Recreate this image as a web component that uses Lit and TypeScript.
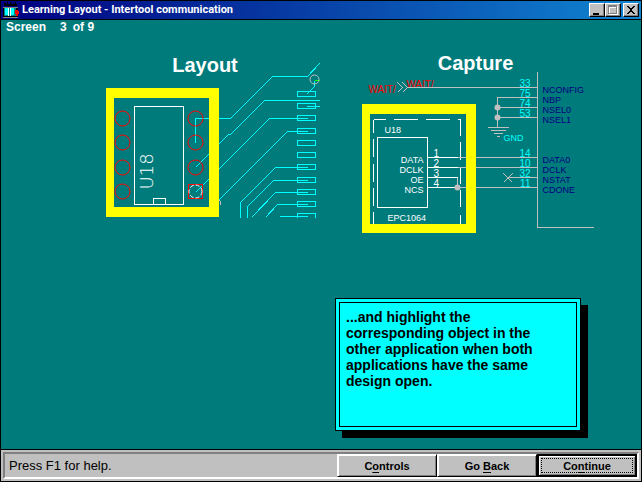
import { LitElement, html, css, svg } from "lit";
import { customElement } from "lit/decorators.js";

const frameColor = "#ffff00";

@customElement("layout-diagram")
class LayoutDiagram extends LitElement {
  static styles = css`
    :host { display: block; }
    svg { display: block; shape-rendering: crispEdges; }
    circle { shape-rendering: geometricPrecision; }
    .trace { fill: none; stroke: #00ffff; }
    .pad { fill: none; stroke: #ff0000; }
    .via { fill: none; stroke: #c0c0c0; }
    .white { fill: none; stroke: #ffffff; }
    .green { stroke: #00ff00; }
    .part { font: 200 18px "DejaVu Sans", sans-serif; fill: #ffffff; }
  `;

  render() {
    const pinRows = [118, 142, 167];
    const padRows = [91, 103, 115, 128, 140, 152, 164, 177, 189, 201, 213];
    return html`<svg width="230" height="175" viewBox="99.5 49.5 230 175" role="img" aria-label="Layout view of part U18">
      <g class="trace">
        <path d="M195 142V118H230L272 76H307L319 63" />
        <path d="M195 167L228 134H230L264 100H319" />
        <path d="M195 192L269 118H307" />
        <path d="M218 200L287 131H307" />
        <path d="M306 94L314 86V80" />
        <path d="M306 106H319" />
        <path d="M307 167H275L240 202V217" />
        <path d="M307 180H273L247 206V217" />
        <path d="M307 192H275L251 217" />
        <path d="M307 204H277L265 217" />
        <path d="M307 216H279" />
        ${padRows.map((y) => y === 213
          ? svg`<path d="M297 217V213H315V217" />`
          : svg`<rect x="297" y=${y} width="18" height="5" />`)}
      </g>
      <path class="green" d="M314 80H319" />
      <circle class="via" cx="314" cy="79" r="4.5" />
      <path class="via" d="M219 200L220 201V204L219 205" />
      <path fill=${frameColor} fill-rule="evenodd" d="M105.5 87.5H218.5V216.5H105.5ZM113.5 97.5V206.5H208.5V97.5Z" />
      <g class="trace">
        <path d="M195 142V118H208M195 167L208 154M195 192L208 179" />
      </g>
      <g class="pad">
        ${[...pinRows, 191].map((y) => svg`<circle cx="122" cy=${y} r="7.5" />`)}
        ${pinRows.map((y) => svg`<circle cx="195" cy=${y} r="7.5" />`)}
        <rect x="188" y="184" width="14" height="14" />
      </g>
      <circle class="white" cx="195" cy="191" r="6.5" stroke-dasharray="4 2" />
      <path class="white" d="M134 106H183V204H134ZM153 204V198H165V204" />
      <text class="part" transform="translate(152 189) rotate(-90)">U18</text>
    </svg>`;
  }
}

@customElement("capture-diagram")
class CaptureDiagram extends LitElement {
  static styles = css`
    :host { display: block; }
    svg { display: block; shape-rendering: crispEdges; }
    circle { shape-rendering: geometricPrecision; }
    text { font: 10px "Liberation Sans", Arial, sans-serif; }
    .wire { fill: none; stroke: #c0c0c0; }
    .dot { fill: #c0c0c0; }
    .white { fill: none; stroke: #ffffff; }
    .label { fill: #ffffff; }
    .small { font-size: 9px; }
    .net { fill: #ff0000; }
    .number { fill: #00ffff; }
    .signal { fill: #000080; }
    .end { text-anchor: end; }
  `;

  render() {
    const pins: [string, number][] = [["DATA", 162], ["DCLK", 172], ["OE", 182], ["NCS", 192]];
    const ports: [string, string, number][] = [
      ["33", "NCONFIG", 92], ["75", "NBP", 102], ["74", "NSEL0", 112], ["53", "NSEL1", 122],
      ["14", "DATA0", 162], ["10", "DCLK", 172], ["32", "NSTAT", 182], ["11", "CDONE", 192],
    ];
    return html`<svg width="245" height="190" viewBox="354.5 49.5 245 190" role="img" aria-label="Capture view of part U18">
      <text class="net" x="368" y="92">WAIT/</text>
      <text class="net" x="406" y="87">WAIT/</text>
      <g class="wire">
        <path d="M397 82L402 87L397 92M402 82L407 87L402 92M407 87H537" />
        <path d="M537 71V227H593M497 127V97H537M497 107H537M497 117H537" />
        <path d="M487 127H508M490 130H505M493 133H502M496 136H499" />
        <path d="M457 157H537M457 167H537M457 177V187H537M507 177H537" />
        <path d="M503 173L512 182M512 173L503 182" />
      </g>
      <path fill=${frameColor} fill-rule="evenodd" d="M361.5 103.5H475.5V232.5H361.5ZM369.5 113.5V223.5H465.5V113.5Z" />
      <g class="white">
        <rect x="377" y="137" width="50" height="70" />
        <path d="M427 157H457M427 167H457M427 177H457M427 187H457" />
        <path d="M373 119H385M393 119H417M425 119H449M457 119H460" />
        <path d="M373 119V132M373 138V156M373 163V181M373 187V205M373 211V223" />
        <path d="M460 119V135M460 141V159M460 166V183M460 189V206M460 214V223" />
      </g>
      <g class="wire"><path d="M457 157H465M457 167H465M457 187H465M457 177V187" /></g>
      <g class="dot">
        <circle cx="457" cy="187" r="3" />
        <circle cx="497" cy="107" r="3" />
        <circle cx="497" cy="117" r="3" />
      </g>
      <text class="label small" x="384" y="132">U18</text>
      <text class="label small" x="387" y="220">EPC1064</text>
      ${pins.map(([name, y], i) => svg`
        <text class="label small end" x="423" y=${y}>${name}</text>
        <text class="label" x="433" y=${y - 6}>${i + 1}</text>`)}
      ${ports.map(([pin, name, y]) => svg`
        <text class="number end" x="530" y=${y - 6}>${pin}</text>
        <text class="signal small" x="542" y=${y}>${name}</text>`)}
      <text class="number small" x="503" y="140">GND</text>
    </svg>`;
  }
}

@customElement("app-root")
class AppRoot extends LitElement {
  static styles = css`
    :host {
      display: flex;
      flex-direction: column;
      box-sizing: border-box;
      min-height: 100vh;
      border: 1px solid #000;
      background: #007b7b;
      color: #000;
      font: 12px/16px "Liberation Sans", Arial, sans-serif;
    }
    .title-bar {
      display: flex;
      align-items: center;
      height: 18px;
      padding: 0 2px;
      border-bottom: 1px solid #000;
      background: linear-gradient(to right, #000080, #1084d0);
      color: #fff;
    }
    .app-icon { width: 16px; height: 16px; margin-right: 3px; }
    h1 { flex: 1; margin: 0; font: bold 11px/16px Roboto, "Liberation Sans", sans-serif; white-space: nowrap; }
    .window-controls { display: flex; }
    .window-controls button {
      display: grid;
      place-items: center;
      width: 16px;
      height: 14px;
      padding: 0;
      border: 1px solid;
      border-color: #fff #000 #000 #fff;
      background: #c0c0c0;
      box-shadow: inset -1px -1px #808080;
    }
    .window-controls .close { margin-left: 2px; }
    .window-controls svg { display: block; shape-rendering: crispEdges; }
    .progress {
      display: flex;
      gap: 6px;
      margin: 0;
      padding: 0 5px;
      color: #fff;
      font-weight: bold;
      line-height: 14px;
    }
    .progress .count { margin-left: 8px; }
    main { flex: 1; }
    .figures { display: flex; gap: 25px; padding: 16px 0 0 99px; }
    figure { display: grid; margin: 0; }
    figure > * { grid-area: 1 / 1; }
    figcaption {
      align-self: start;
      justify-self: center;
      color: #fff;
      font-weight: bold;
      font-size: 20px;
      line-height: 24px;
    }
    .layout figcaption { margin-top: 3px; margin-right: 20px; }
    .capture figcaption { margin-top: 1px; margin-right: 4px; }
    .note {
      box-sizing: border-box;
      width: 246px;
      min-height: 133px;
      margin: 58px 60px 12px auto;
      padding: 3px;
      display: flex;
      border: 1px solid #000;
      background: #00ffff;
      box-shadow: 7px 7px #000;
    }
    .note p {
      flex: 1;
      margin: 0;
      padding: 6px 24px 6px 6px;
      border: 1px solid #000;
      font-weight: bold;
      font-size: 14px;
      line-height: 16px;
    }
    footer { padding: 2px; border-top: 1px solid #000; background: #c0c0c0; }
    .status {
      display: flex;
      align-items: center;
      border: 2px solid;
      border-color: #808080 #fff #fff #808080;
    }
    .status p { flex: 1; margin: 0; padding-left: 4px; font-size: 13px; }
    .status button {
      box-sizing: border-box;
      width: 100px;
      height: 23px;
      padding: 0;
      border: 1px solid;
      border-color: #fff #000 #000 #fff;
      background: #c0c0c0;
      box-shadow: inset 1px 1px #fff, inset -1px -1px #808080;
      color: #000;
      font: bold 11px/16px "Liberation Sans", Arial, sans-serif;
    }
    .status .default {
      border: 2px solid #000;
      outline: 1px dotted #000;
      outline-offset: -5px;
    }
    u { text-underline-offset: 2px; }
  `;

  render() {
    return html`
      <header class="title-bar">
        <svg class="app-icon" viewBox="0 0 16 16" shape-rendering="crispEdges" aria-hidden="true">
          <path fill="#000" d="M1 1h2v1h1V0h1v2h2V0h1v2h2V1h1v1h1V0h1v2h1v2H1z" />
          <path fill="#808080" d="M0 5h15v1H0zM0 15h15v1H0z" />
          <path fill="#000" d="M0 6h15v9H0z" />
          <path fill="#008080" d="M1 6h12v8H1z" />
          <path fill="#00ffff" d="M2 6h4v7H2zM7 6h4v7H7z" />
          <path fill="#fff" d="M5 6h1v8H5zM7 6h1v8H7z" />
          <path fill="#ff0000" d="M12 8h3v1h1v3h-1v2h-2v-2h-1z" />
        </svg>
        <h1>Learning Layout - Intertool communication</h1>
        <div class="window-controls">
          <button aria-label="Minimize"><svg width="12" height="10"><path d="M2 8h6v2H2z" /></svg></button>
          <button aria-label="Maximize"><svg width="12" height="10">
            <path fill="#fff" fill-rule="evenodd" d="M2 1h9v9H2zM3 3v6h7V3z" />
            <path fill="#808080" fill-rule="evenodd" d="M1 0h9v9H1zM2 2v6h7V2z" /></svg></button>
          <button class="close" aria-label="Close"><svg width="12" height="10">
            <path d="M2 1h2v1h1v1h2V2h1V1h2v1H9v1H8v1H7v2h1v1h1v1h1v1H8V8H7V7H5v1H4v1H2V8h1V7h1V6h1V4H4V3H3V2H2z" /></svg></button>
        </div>
      </header>
      <p class="progress"><span>Screen</span><span class="count">3</span><span>of 9</span></p>
      <main>
        <div class="figures">
          <figure class="layout">
            <layout-diagram></layout-diagram>
            <figcaption>Layout</figcaption>
          </figure>
          <figure class="capture">
            <capture-diagram></capture-diagram>
            <figcaption>Capture</figcaption>
          </figure>
        </div>
        <section class="note">
          <p>...and highlight the corresponding object in the other application when both applications have the same design open.</p>
        </section>
      </main>
      <footer>
        <div class="status">
          <p>Press F1 for help.</p>
          <button>C<u>o</u>ntrols</button>
          <button>Go <u>B</u>ack</button>
          <button class="default">Co<u>n</u>tinue</button>
        </div>
      </footer>
    `;
  }
}
